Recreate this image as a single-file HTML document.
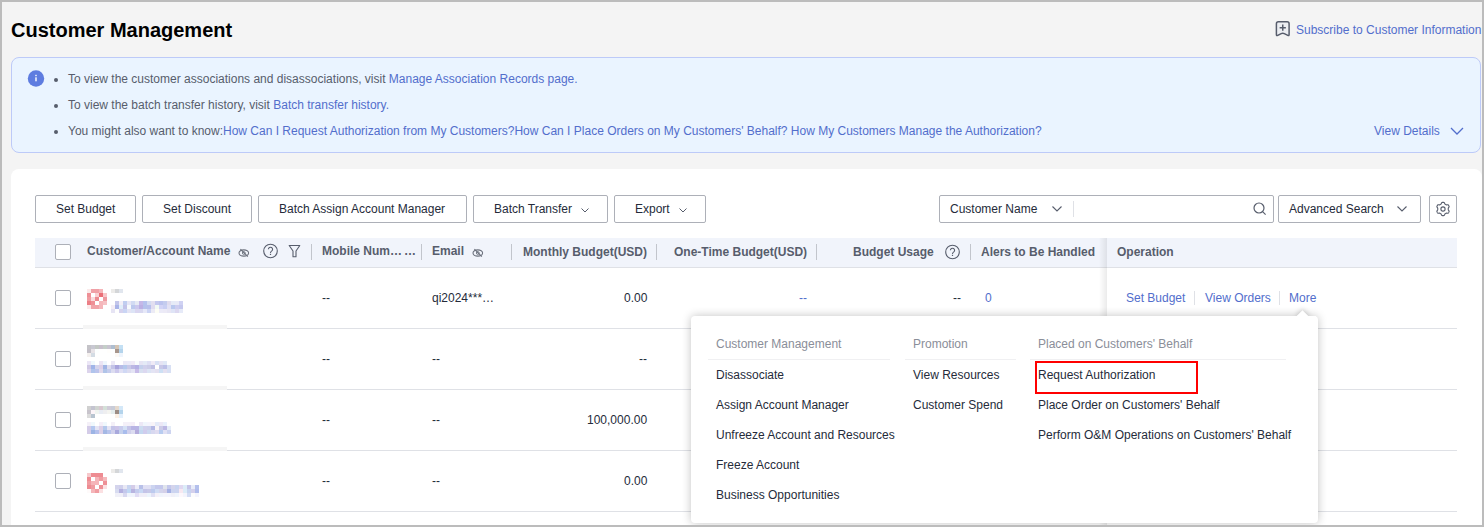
<!DOCTYPE html>
<html><head><meta charset="utf-8">
<style>
*{box-sizing:border-box;margin:0;padding:0}
html,body{width:1484px;height:527px;overflow:hidden;background:#f4f4f4;font-family:"Liberation Sans",sans-serif;color:#252b3a}
.t{position:absolute;font-size:12px;line-height:14px;white-space:nowrap}
.b{font-weight:bold}
.lk{color:#526ecc}
.sec{color:#575d6c}
.frame{position:absolute;left:0;top:0;width:1484px;height:527px;border:2px solid #bcbcbc;z-index:100;pointer-events:none}
.info{position:absolute;left:11px;top:57px;width:1470px;height:96px;background:#eaf4ff;border:1px solid #bdcaf8;border-radius:8px}
.card{position:absolute;left:11px;top:169px;width:1471px;height:400px;background:#fff;border-radius:8px}
.btn{position:absolute;top:195px;height:28px;border:1px solid #adb0b8;border-radius:2px;background:#fff}
.thead{position:absolute;left:35px;top:238px;width:1422px;height:30px;background:#f1f4fb;border-bottom:1px solid #dfe1e6}
.row{position:absolute;left:35px;width:1422px;height:61px;border-bottom:1px solid #dfe1e6}
.cb{position:absolute;width:16px;height:16px;border:1px solid #adb0b8;border-radius:2px;background:#fff}
.sep{position:absolute;width:1px;background:#c2c5cc}
.dd{position:absolute;left:691px;top:316px;width:627px;height:207px;background:#fff;border-radius:4px;box-shadow:0 0 10px rgba(0,0,0,0.24);z-index:10}
.ddc{position:absolute;left:0;top:0;z-index:13}
.gh{color:#8a8e99}
.hr{position:absolute;top:359px;height:1px;background:#f0f0f2}
</style></head><body>
<div class="frame"></div>
<div class="t b" style="left:11px;top:19px;font-size:20px;line-height:22px;color:#000">Customer Management</div>
<!-- subscribe -->
<svg style="position:absolute;left:1275px;top:20px" width="16" height="18" viewBox="0 0 16 18"><path d="M1.4 3.7Q1.4 1.7 3.4 1.7H12.1Q14.1 1.7 14.1 3.7V14.6Q14.1 16 12.8 15.4L9.3 13.6Q7.75 12.8 6.2 13.6L2.7 15.4Q1.4 16 1.4 14.6Z" fill="#eceef2" stroke="#575d6c" stroke-width="1.5" stroke-linejoin="round"/><path d="M7.75 4.6v6.2M4.65 7.7h6.2" stroke="#575d6c" stroke-width="1.5"/></svg>
<div class="t lk" style="left:1296px;top:23px">Subscribe to Customer Information</div>
<!-- info -->
<div class="info"></div>
<svg style="position:absolute;left:27px;top:70px" width="18" height="18" viewBox="0 0 18 18"><circle cx="9" cy="8.5" r="8.2" fill="#5e7ce0"/><rect x="8.3" y="7.3" width="1.4" height="4" fill="#fff"/><rect x="8.3" y="4.8" width="1.4" height="1.4" fill="#fff"/></svg>
<div style="position:absolute;left:54px;top:78px;width:4px;height:4px;border-radius:2px;background:#575d6c"></div>
<div style="position:absolute;left:54px;top:104px;width:4px;height:4px;border-radius:2px;background:#575d6c"></div>
<div style="position:absolute;left:54px;top:130px;width:4px;height:4px;border-radius:2px;background:#575d6c"></div>
<div class="t sec" style="left:68px;top:72px">To view the customer associations and disassociations, visit <span class="lk">Manage Association Records page.</span></div>
<div class="t sec" style="left:68px;top:98px">To view the batch transfer history, visit <span class="lk">Batch transfer history.</span></div>
<div class="t sec" style="left:68px;top:124px">You might also want to know:<span class="lk">How Can I Request Authorization from My Customers?How Can I Place Orders on My Customers' Behalf? How My Customers Manage the Authorization?</span></div>
<div class="t lk" style="left:1374px;top:124px">View Details</div>
<svg style="position:absolute;left:1450px;top:126px" width="14" height="10" viewBox="0 0 14 10"><path d="M1 2l6 6 6-6" fill="none" stroke="#526ecc" stroke-width="1.3"/></svg>
<!-- card -->
<div class="card"></div>
<div class="btn" style="left:35px;width:101px"></div><div class="t" style="left:56px;top:202px">Set Budget</div>
<div class="btn" style="left:142px;width:110px"></div><div class="t" style="left:163px;top:202px">Set Discount</div>
<div class="btn" style="left:258px;width:209px"></div><div class="t" style="left:279px;top:202px">Batch Assign Account Manager</div>
<div class="btn" style="left:473px;width:135px"></div><div class="t" style="left:494px;top:202px">Batch Transfer</div>
<svg style="position:absolute;left:580px;top:206px" width="10" height="8" viewBox="0 0 10 8"><path d="M1.5 2.5l3.5 3.5 3.5-3.5" fill="none" stroke="#575d6c" stroke-width="1"/></svg>
<div class="btn" style="left:614px;width:92px"></div><div class="t" style="left:635px;top:202px">Export</div>
<svg style="position:absolute;left:678px;top:206px" width="10" height="8" viewBox="0 0 10 8"><path d="M1.5 2.5l3.5 3.5 3.5-3.5" fill="none" stroke="#575d6c" stroke-width="1"/></svg>
<!-- search -->
<div class="btn" style="left:939px;width:335px"></div>
<div class="t" style="left:950px;top:202px">Customer Name</div>
<svg style="position:absolute;left:1050px;top:204px" width="14" height="10" viewBox="0 0 14 10"><path d="M2.5 2.5l4.5 4.5 4.5-4.5" fill="none" stroke="#575d6c" stroke-width="1.1"/></svg>
<div class="sep" style="left:1073px;top:201px;height:16px;background:#dfe1e6"></div>
<svg style="position:absolute;left:1253px;top:202px" width="14" height="14" viewBox="0 0 14 14"><circle cx="6" cy="6" r="5" fill="none" stroke="#575d6c" stroke-width="1.2"/><path d="M9.6 9.6l3 3" stroke="#575d6c" stroke-width="1.2"/></svg>
<div class="btn" style="left:1278px;width:143px"></div>
<div class="t" style="left:1289px;top:202px">Advanced Search</div>
<svg style="position:absolute;left:1395px;top:204px" width="14" height="10" viewBox="0 0 14 10"><path d="M2.5 2.5l4.5 4.5 4.5-4.5" fill="none" stroke="#575d6c" stroke-width="1.1"/></svg>
<div class="btn" style="left:1429px;width:28px"></div>
<svg style="position:absolute;left:1435px;top:201px" width="16" height="16" viewBox="0 0 16 16"><path d="M13.25 8.00 L13.25 7.77 L13.25 7.54 L13.26 7.31 L13.31 7.06 L13.47 6.79 L13.75 6.46 L14.00 6.11 L14.11 5.78 L14.09 5.48 L14.01 5.20 L13.90 4.93 L13.76 4.68 L13.61 4.43 L13.43 4.20 L13.23 3.99 L12.98 3.82 L12.64 3.75 L12.21 3.79 L11.79 3.87 L11.47 3.87 L11.23 3.79 L11.02 3.68 L10.82 3.57 L10.62 3.45 L10.43 3.34 L10.23 3.23 L10.03 3.10 L9.85 2.93 L9.69 2.65 L9.54 2.25 L9.36 1.85 L9.13 1.60 L8.86 1.46 L8.58 1.39 L8.29 1.36 L8.00 1.35 L7.71 1.36 L7.42 1.39 L7.14 1.46 L6.87 1.60 L6.64 1.85 L6.46 2.25 L6.31 2.65 L6.15 2.93 L5.97 3.10 L5.77 3.23 L5.57 3.34 L5.38 3.45 L5.18 3.57 L4.98 3.68 L4.77 3.79 L4.53 3.87 L4.21 3.87 L3.79 3.79 L3.36 3.75 L3.02 3.82 L2.77 3.99 L2.57 4.20 L2.39 4.43 L2.24 4.67 L2.10 4.93 L1.99 5.20 L1.91 5.48 L1.89 5.78 L2.00 6.11 L2.25 6.46 L2.53 6.79 L2.69 7.06 L2.74 7.31 L2.75 7.54 L2.75 7.77 L2.75 8.00 L2.75 8.23 L2.75 8.46 L2.74 8.69 L2.69 8.94 L2.53 9.21 L2.25 9.54 L2.00 9.89 L1.89 10.22 L1.91 10.52 L1.99 10.80 L2.10 11.07 L2.24 11.33 L2.39 11.57 L2.57 11.80 L2.77 12.01 L3.02 12.18 L3.36 12.25 L3.79 12.21 L4.21 12.13 L4.53 12.13 L4.77 12.21 L4.98 12.32 L5.18 12.43 L5.37 12.55 L5.57 12.66 L5.77 12.77 L5.97 12.90 L6.15 13.07 L6.31 13.35 L6.46 13.75 L6.64 14.15 L6.87 14.40 L7.14 14.54 L7.42 14.61 L7.71 14.64 L8.00 14.65 L8.29 14.64 L8.58 14.61 L8.86 14.54 L9.13 14.40 L9.36 14.15 L9.54 13.75 L9.69 13.35 L9.85 13.07 L10.03 12.90 L10.23 12.77 L10.43 12.66 L10.62 12.55 L10.82 12.43 L11.02 12.32 L11.23 12.21 L11.47 12.13 L11.79 12.13 L12.21 12.21 L12.64 12.25 L12.98 12.18 L13.23 12.01 L13.43 11.80 L13.61 11.57 L13.76 11.32 L13.90 11.07 L14.01 10.80 L14.09 10.52 L14.11 10.22 L14.00 9.89 L13.75 9.54 L13.47 9.21 L13.31 8.94 L13.26 8.69 L13.25 8.46 L13.25 8.23Z" fill="none" stroke="#575d6c" stroke-width="1.1" stroke-linejoin="round"/><circle cx="8" cy="8" r="2.1" fill="none" stroke="#575d6c" stroke-width="1.1"/></svg>
<!-- table header -->
<div class="thead"></div>
<div class="cb" style="left:55px;top:244px"></div>
<div class="t b sec" style="left:87px;top:244px">Customer/Account Name</div>
<div class="t b sec" style="left:322px;top:244px">Mobile Num…<span style="margin-left:2px">…</span></div>
<div class="t b sec" style="left:432px;top:244px">Email</div>
<div class="t b sec" style="left:523px;top:245px">Monthly Budget(USD)</div>
<div class="t b sec" style="left:674px;top:245px">One-Time Budget(USD)</div>
<div class="t b sec" style="left:853px;top:245px">Budget Usage</div>
<div class="t b sec" style="left:981px;top:245px">Alers to Be Handled</div>
<div class="t b sec" style="left:1117px;top:245px">Operation</div>

<svg style="position:absolute;left:237px;top:248px" width="14" height="11" viewBox="0 0 14 11"><ellipse cx="6.8" cy="5" rx="4.8" ry="3.1" fill="none" stroke="#6b707c" stroke-width="1.1"/><circle cx="6.8" cy="5" r="1.4" fill="none" stroke="#6b707c" stroke-width="0.9"/><path d="M3.4 1.2L10.8 8.6" stroke="#6b707c" stroke-width="1.1"/></svg>
<svg style="position:absolute;left:262px;top:243px" width="17" height="16" viewBox="0 0 17 16"><circle cx="8.5" cy="8" r="6.8" fill="none" stroke="#575d6c" stroke-width="1.1"/><path d="M6.4 6.3a2.1 2.1 0 1 1 3.2 1.8c-.8.5-1.1.9-1.1 1.8" fill="none" stroke="#575d6c" stroke-width="1.1"/><rect x="7.9" y="10.8" width="1.2" height="1.2" fill="#575d6c"/></svg>
<svg style="position:absolute;left:288px;top:244px" width="13" height="14" viewBox="0 0 13 14"><path d="M1.2 1.5h10.6L8 7v5.8H5V7z" fill="none" stroke="#575d6c" stroke-width="1.1" stroke-linejoin="round"/></svg>
<svg style="position:absolute;left:471px;top:248px" width="14" height="11" viewBox="0 0 14 11"><ellipse cx="6.8" cy="5" rx="4.8" ry="3.1" fill="none" stroke="#6b707c" stroke-width="1.1"/><circle cx="6.8" cy="5" r="1.4" fill="none" stroke="#6b707c" stroke-width="0.9"/><path d="M3.4 1.2L10.8 8.6" stroke="#6b707c" stroke-width="1.1"/></svg>
<svg style="position:absolute;left:944px;top:244px" width="17" height="16" viewBox="0 0 17 16"><circle cx="8.5" cy="8" r="6.8" fill="none" stroke="#575d6c" stroke-width="1.1"/><path d="M6.4 6.3a2.1 2.1 0 1 1 3.2 1.8c-.8.5-1.1.9-1.1 1.8" fill="none" stroke="#575d6c" stroke-width="1.1"/><rect x="7.9" y="10.8" width="1.2" height="1.2" fill="#575d6c"/></svg>
<div class="sep" style="left:311px;top:244px;height:16px"></div>
<div class="sep" style="left:421px;top:244px;height:16px"></div>
<div class="sep" style="left:511px;top:244px;height:16px"></div>
<div class="sep" style="left:656px;top:244px;height:16px"></div>
<div class="sep" style="left:816px;top:244px;height:16px"></div>
<div class="sep" style="left:970px;top:244px;height:16px"></div>

<!-- rows -->
<div class="row" style="top:268px"></div>
<div class="row" style="top:329px"></div>
<div class="row" style="top:390px"></div>
<div class="row" style="top:451px"></div>
<div style="position:absolute;left:83px;top:325px;width:144px;height:4px;background:#f5f5f5"></div>
<div style="position:absolute;left:83px;top:386px;width:144px;height:4px;background:#f5f5f5"></div>
<div style="position:absolute;left:83px;top:447px;width:144px;height:4px;background:#f5f5f5"></div>
<div class="cb" style="left:55px;top:290px"></div>
<div class="cb" style="left:55px;top:351px"></div>
<div class="cb" style="left:55px;top:412px"></div>
<div class="cb" style="left:55px;top:473px"></div>
<svg style="position:absolute;left:87px;top:289px" width="20" height="20" shape-rendering="crispEdges"><rect x="0" y="0" width="4" height="4" fill="#fbeaea"/><rect x="4" y="0" width="4" height="4" fill="#f0a0a6"/><rect x="8" y="0" width="4" height="4" fill="#f0a0a6"/><rect x="12" y="0" width="4" height="4" fill="#f5b5b9"/><rect x="0" y="4" width="4" height="4" fill="#ee9096"/><rect x="8" y="4" width="4" height="4" fill="#f8d0d3"/><rect x="12" y="4" width="4" height="4" fill="#ea6f77"/><rect x="16" y="4" width="4" height="4" fill="#f7c7ca"/><rect x="0" y="8" width="4" height="4" fill="#f09ca1"/><rect x="4" y="8" width="4" height="4" fill="#f9dadd"/><rect x="8" y="8" width="4" height="4" fill="#ec8a90"/><rect x="16" y="8" width="4" height="4" fill="#ee9aa0"/><rect x="0" y="12" width="4" height="4" fill="#ec7f86"/><rect x="4" y="12" width="4" height="4" fill="#ee9096"/><rect x="12" y="12" width="4" height="4" fill="#f5b7bb"/><rect x="16" y="12" width="4" height="4" fill="#f5c1c4"/><rect x="0" y="16" width="4" height="4" fill="#fbe9ea"/><rect x="4" y="16" width="4" height="4" fill="#f0a3a8"/><rect x="8" y="16" width="4" height="4" fill="#f0a3a8"/><rect x="12" y="16" width="4" height="4" fill="#f5b5b9"/></svg>
<svg style="position:absolute;left:111px;top:289px" width="12" height="4" shape-rendering="crispEdges"><rect x="0" y="0" width="4" height="4" fill="#ecebe9"/><rect x="4" y="0" width="4" height="4" fill="#d4d6d8"/><rect x="8" y="0" width="4" height="4" fill="#e1e6ee"/></svg>
<svg style="position:absolute;left:111px;top:301px" width="72" height="12" shape-rendering="crispEdges"><rect x="4" y="0" width="4" height="4" fill="#c3c6ea"/><rect x="8" y="0" width="4" height="4" fill="#f3eff8"/><rect x="12" y="0" width="4" height="4" fill="#c0cdf0"/><rect x="16" y="0" width="4" height="4" fill="#e6e6f6"/><rect x="20" y="0" width="4" height="4" fill="#d2dbf3"/><rect x="24" y="0" width="4" height="4" fill="#e6eaf4"/><rect x="28" y="0" width="4" height="4" fill="#c5b8e8"/><rect x="32" y="0" width="4" height="4" fill="#b5c2ee"/><rect x="36" y="0" width="4" height="4" fill="#d4dcf2"/><rect x="40" y="0" width="4" height="4" fill="#e2dff0"/><rect x="44" y="0" width="4" height="4" fill="#c4c8ee"/><rect x="48" y="0" width="4" height="4" fill="#bcc3ee"/><rect x="52" y="0" width="4" height="4" fill="#c4ccee"/><rect x="56" y="0" width="4" height="4" fill="#e0dcee"/><rect x="60" y="0" width="4" height="4" fill="#e6ebf7"/><rect x="64" y="0" width="4" height="4" fill="#e8eaf7"/><rect x="68" y="0" width="4" height="4" fill="#d0d2f3"/><rect x="0" y="4" width="4" height="4" fill="#f5eef5"/><rect x="4" y="4" width="4" height="4" fill="#aab4e8"/><rect x="8" y="4" width="4" height="4" fill="#e0eefa"/><rect x="12" y="4" width="4" height="4" fill="#c3c3e9"/><rect x="16" y="4" width="4" height="4" fill="#f7fafd"/><rect x="20" y="4" width="4" height="4" fill="#bcc9ee"/><rect x="24" y="4" width="4" height="4" fill="#cbc8ee"/><rect x="28" y="4" width="4" height="4" fill="#bcb0e4"/><rect x="32" y="4" width="4" height="4" fill="#b5c2ec"/><rect x="36" y="4" width="4" height="4" fill="#b8c0ec"/><rect x="40" y="4" width="4" height="4" fill="#e0dcf0"/><rect x="44" y="4" width="4" height="4" fill="#f2faf4"/><rect x="48" y="4" width="4" height="4" fill="#d3d4f6"/><rect x="52" y="4" width="4" height="4" fill="#c9cff3"/><rect x="56" y="4" width="4" height="4" fill="#e2e1f4"/><rect x="60" y="4" width="4" height="4" fill="#b9c8ee"/><rect x="64" y="4" width="4" height="4" fill="#cdcdf0"/><rect x="68" y="4" width="4" height="4" fill="#c5c8ee"/><rect x="0" y="8" width="4" height="4" fill="#e6e4f4"/><rect x="4" y="8" width="4" height="4" fill="#fefefe"/><rect x="8" y="8" width="4" height="4" fill="#d6d2ee"/><rect x="12" y="8" width="4" height="4" fill="#cad5f4"/><rect x="16" y="8" width="4" height="4" fill="#e4e4f4"/><rect x="20" y="8" width="4" height="4" fill="#dde4f6"/><rect x="24" y="8" width="4" height="4" fill="#dad6f0"/><rect x="28" y="8" width="4" height="4" fill="#d8d8f0"/><rect x="32" y="8" width="4" height="4" fill="#e6e8f8"/><rect x="36" y="8" width="4" height="4" fill="#ccd4f4"/><rect x="40" y="8" width="4" height="4" fill="#ecebf5"/><rect x="44" y="8" width="4" height="4" fill="#fdfdf5"/><rect x="48" y="8" width="4" height="4" fill="#ecebf8"/><rect x="52" y="8" width="4" height="4" fill="#eceaf6"/><rect x="56" y="8" width="4" height="4" fill="#e8e6f4"/><rect x="60" y="8" width="4" height="4" fill="#dfe4f6"/><rect x="64" y="8" width="4" height="4" fill="#dcd8f0"/><rect x="68" y="8" width="4" height="4" fill="#e6eaf8"/></svg>
<svg style="position:absolute;left:87px;top:345px" width="36" height="12" shape-rendering="crispEdges"><rect x="0" y="0" width="4" height="4" fill="#c4c3c8"/><rect x="4" y="0" width="4" height="4" fill="#c8c8d2"/><rect x="8" y="0" width="4" height="4" fill="#c3c8c4"/><rect x="12" y="0" width="4" height="4" fill="#c8c0cc"/><rect x="16" y="0" width="4" height="4" fill="#c4cec8"/><rect x="20" y="0" width="4" height="4" fill="#c8c4d0"/><rect x="24" y="0" width="4" height="4" fill="#aebed0"/><rect x="28" y="0" width="4" height="4" fill="#d4c4b4"/><rect x="32" y="0" width="4" height="4" fill="#c4e0f4"/><rect x="0" y="4" width="4" height="4" fill="#c4c0c8"/><rect x="4" y="4" width="4" height="4" fill="#e8e4e8"/><rect x="8" y="4" width="4" height="4" fill="#fcffff"/><rect x="20" y="4" width="4" height="4" fill="#fffefc"/><rect x="28" y="4" width="4" height="4" fill="#a8968c"/><rect x="32" y="4" width="4" height="4" fill="#b4d4ec"/><rect x="0" y="8" width="4" height="4" fill="#f4f0ee"/><rect x="4" y="8" width="4" height="4" fill="#d4dce4"/><rect x="28" y="8" width="4" height="4" fill="#fcf8f4"/><rect x="32" y="8" width="4" height="4" fill="#eef4fc"/></svg>
<svg style="position:absolute;left:87px;top:361px" width="84" height="12" shape-rendering="crispEdges"><rect x="0" y="0" width="4" height="4" fill="#ebe6f6"/><rect x="4" y="0" width="4" height="4" fill="#f0f8fc"/><rect x="12" y="0" width="4" height="4" fill="#ebe4f4"/><rect x="16" y="0" width="4" height="4" fill="#eef6fc"/><rect x="24" y="0" width="4" height="4" fill="#ebe8f6"/><rect x="36" y="0" width="4" height="4" fill="#ebe8f6"/><rect x="40" y="0" width="4" height="4" fill="#ebeaf8"/><rect x="44" y="0" width="4" height="4" fill="#efeaf6"/><rect x="48" y="0" width="4" height="4" fill="#f8fcfc"/><rect x="52" y="0" width="4" height="4" fill="#e6e4f4"/><rect x="56" y="0" width="4" height="4" fill="#e4eaf6"/><rect x="60" y="0" width="4" height="4" fill="#dedff4"/><rect x="64" y="0" width="4" height="4" fill="#efeaf6"/><rect x="68" y="0" width="4" height="4" fill="#d8e0f4"/><rect x="72" y="0" width="4" height="4" fill="#e6e4f4"/><rect x="76" y="0" width="4" height="4" fill="#e0e8f6"/><rect x="0" y="4" width="4" height="4" fill="#d0c8e4"/><rect x="4" y="4" width="4" height="4" fill="#a0b4e8"/><rect x="8" y="4" width="4" height="4" fill="#d4d4ec"/><rect x="12" y="4" width="4" height="4" fill="#dcd0e8"/><rect x="16" y="4" width="4" height="4" fill="#a0b4e4"/><rect x="20" y="4" width="4" height="4" fill="#dcdcee"/><rect x="24" y="4" width="4" height="4" fill="#c4c4e8"/><rect x="28" y="4" width="4" height="4" fill="#a8a4dc"/><rect x="32" y="4" width="4" height="4" fill="#b8bce8"/><rect x="36" y="4" width="4" height="4" fill="#b4c8ec"/><rect x="40" y="4" width="4" height="4" fill="#c8c8e8"/><rect x="44" y="4" width="4" height="4" fill="#bcb8e4"/><rect x="48" y="4" width="4" height="4" fill="#b4b0e4"/><rect x="52" y="4" width="4" height="4" fill="#c4d0ec"/><rect x="56" y="4" width="4" height="4" fill="#d0d0ec"/><rect x="60" y="4" width="4" height="4" fill="#cccce8"/><rect x="64" y="4" width="4" height="4" fill="#c0c0e4"/><rect x="72" y="4" width="4" height="4" fill="#c8c8e8"/><rect x="76" y="4" width="4" height="4" fill="#bcc0e8"/><rect x="80" y="4" width="4" height="4" fill="#d8e0f4"/><rect x="0" y="8" width="4" height="4" fill="#dcd4ec"/><rect x="4" y="8" width="4" height="4" fill="#b0c4ec"/><rect x="8" y="8" width="4" height="4" fill="#bcc4ec"/><rect x="12" y="8" width="4" height="4" fill="#e0d8ec"/><rect x="16" y="8" width="4" height="4" fill="#b0c4e8"/><rect x="20" y="8" width="4" height="4" fill="#c4cced"/><rect x="24" y="8" width="4" height="4" fill="#dcdcf0"/><rect x="28" y="8" width="4" height="4" fill="#ccc8ec"/><rect x="32" y="8" width="4" height="4" fill="#e0e0f4"/><rect x="36" y="8" width="4" height="4" fill="#d0d8f4"/><rect x="40" y="8" width="4" height="4" fill="#dcdcf0"/><rect x="44" y="8" width="4" height="4" fill="#e4e4f4"/><rect x="48" y="8" width="4" height="4" fill="#c8bce8"/><rect x="52" y="8" width="4" height="4" fill="#d8e0f0"/><rect x="56" y="8" width="4" height="4" fill="#dcd8f0"/><rect x="60" y="8" width="4" height="4" fill="#dce4f4"/><rect x="64" y="8" width="4" height="4" fill="#e4e4f4"/><rect x="68" y="8" width="4" height="4" fill="#e4e0f0"/><rect x="72" y="8" width="4" height="4" fill="#cde0f4"/><rect x="76" y="8" width="4" height="4" fill="#e4e0f0"/><rect x="80" y="8" width="4" height="4" fill="#d8e0f4"/></svg>
<svg style="position:absolute;left:87px;top:406px" width="36" height="12" shape-rendering="crispEdges"><rect x="0" y="0" width="4" height="4" fill="#d0d0d0"/><rect x="4" y="0" width="4" height="4" fill="#c4c4d0"/><rect x="8" y="0" width="4" height="4" fill="#d0d4d0"/><rect x="12" y="0" width="4" height="4" fill="#d8c8d0"/><rect x="16" y="0" width="4" height="4" fill="#d4e0d8"/><rect x="20" y="0" width="4" height="4" fill="#d0ccd8"/><rect x="24" y="0" width="4" height="4" fill="#c8ccd8"/><rect x="28" y="0" width="4" height="4" fill="#e4d8cc"/><rect x="32" y="0" width="4" height="4" fill="#d4e8f8"/><rect x="0" y="4" width="4" height="4" fill="#c8c4cc"/><rect x="4" y="4" width="4" height="4" fill="#fcf4f8"/><rect x="8" y="4" width="4" height="4" fill="#f0f4f0"/><rect x="12" y="4" width="4" height="4" fill="#e8ecf4"/><rect x="16" y="4" width="4" height="4" fill="#eeeef0"/><rect x="20" y="4" width="4" height="4" fill="#f4f4f0"/><rect x="24" y="4" width="4" height="4" fill="#e4ecec"/><rect x="28" y="4" width="4" height="4" fill="#9c8c84"/><rect x="32" y="4" width="4" height="4" fill="#b4d4ec"/><rect x="0" y="8" width="4" height="4" fill="#dcdcdc"/><rect x="4" y="8" width="4" height="4" fill="#b8c4d0"/><rect x="28" y="8" width="4" height="4" fill="#fcf0e4"/><rect x="32" y="8" width="4" height="4" fill="#e4f0fc"/></svg>
<svg style="position:absolute;left:87px;top:422px" width="84" height="12" shape-rendering="crispEdges"><rect x="0" y="0" width="4" height="4" fill="#f4f0f8"/><rect x="4" y="0" width="4" height="4" fill="#f0f8fc"/><rect x="12" y="0" width="4" height="4" fill="#f4eef8"/><rect x="16" y="0" width="4" height="4" fill="#f0f8fc"/><rect x="24" y="0" width="4" height="4" fill="#f4f0f8"/><rect x="36" y="0" width="4" height="4" fill="#f4f0f8"/><rect x="40" y="0" width="4" height="4" fill="#f4f0f8"/><rect x="44" y="0" width="4" height="4" fill="#f4eef8"/><rect x="52" y="0" width="4" height="4" fill="#ece8f6"/><rect x="56" y="0" width="4" height="4" fill="#f0f6fc"/><rect x="60" y="0" width="4" height="4" fill="#f4f4fc"/><rect x="64" y="0" width="4" height="4" fill="#f8f4f8"/><rect x="68" y="0" width="4" height="4" fill="#e4eaf8"/><rect x="72" y="0" width="4" height="4" fill="#ece8f6"/><rect x="76" y="0" width="4" height="4" fill="#e8f0fc"/><rect x="0" y="4" width="4" height="4" fill="#d4cce8"/><rect x="4" y="4" width="4" height="4" fill="#b4c8f0"/><rect x="8" y="4" width="4" height="4" fill="#e4e4f4"/><rect x="12" y="4" width="4" height="4" fill="#dcd0e8"/><rect x="16" y="4" width="4" height="4" fill="#b4c8ec"/><rect x="20" y="4" width="4" height="4" fill="#e4e4f4"/><rect x="24" y="4" width="4" height="4" fill="#c4c4e8"/><rect x="28" y="4" width="4" height="4" fill="#ccc4e8"/><rect x="32" y="4" width="4" height="4" fill="#c8cced"/><rect x="36" y="4" width="4" height="4" fill="#d4e0f4"/><rect x="40" y="4" width="4" height="4" fill="#c4c4e8"/><rect x="44" y="4" width="4" height="4" fill="#b8b4e4"/><rect x="48" y="4" width="4" height="4" fill="#b8b4e4"/><rect x="52" y="4" width="4" height="4" fill="#ccdcf0"/><rect x="56" y="4" width="4" height="4" fill="#d0d0ec"/><rect x="60" y="4" width="4" height="4" fill="#ccd0ec"/><rect x="64" y="4" width="4" height="4" fill="#b4b8e4"/><rect x="68" y="4" width="4" height="4" fill="#f8f4f8"/><rect x="72" y="4" width="4" height="4" fill="#cccce8"/><rect x="76" y="4" width="4" height="4" fill="#bcb8e4"/><rect x="80" y="4" width="4" height="4" fill="#e4ecf8"/><rect x="0" y="8" width="4" height="4" fill="#d4cce8"/><rect x="4" y="8" width="4" height="4" fill="#9cb4e4"/><rect x="8" y="8" width="4" height="4" fill="#b4c0ec"/><rect x="12" y="8" width="4" height="4" fill="#dcd0e8"/><rect x="16" y="8" width="4" height="4" fill="#a4b8e4"/><rect x="20" y="8" width="4" height="4" fill="#b8c4ec"/><rect x="24" y="8" width="4" height="4" fill="#d0d0ec"/><rect x="28" y="8" width="4" height="4" fill="#a8a8dc"/><rect x="32" y="8" width="4" height="4" fill="#c4d0ec"/><rect x="36" y="8" width="4" height="4" fill="#a8bcec"/><rect x="40" y="8" width="4" height="4" fill="#d0d0ec"/><rect x="44" y="8" width="4" height="4" fill="#dcdcf0"/><rect x="48" y="8" width="4" height="4" fill="#b4acdc"/><rect x="52" y="8" width="4" height="4" fill="#c4d8f0"/><rect x="56" y="8" width="4" height="4" fill="#d0cced"/><rect x="60" y="8" width="4" height="4" fill="#ccd8f0"/><rect x="64" y="8" width="4" height="4" fill="#d8d8f0"/><rect x="68" y="8" width="4" height="4" fill="#e0dcf0"/><rect x="72" y="8" width="4" height="4" fill="#b8ccf0"/><rect x="76" y="8" width="4" height="4" fill="#e0e0f4"/><rect x="80" y="8" width="4" height="4" fill="#cdd4f0"/></svg>
<svg style="position:absolute;left:87px;top:473px" width="20" height="20" shape-rendering="crispEdges"><rect x="0" y="0" width="4" height="4" fill="#f7c9cc"/><rect x="4" y="0" width="4" height="4" fill="#ee8c92"/><rect x="8" y="0" width="4" height="4" fill="#ee8c92"/><rect x="12" y="0" width="4" height="4" fill="#ee8c92"/><rect x="0" y="4" width="4" height="4" fill="#ee8c92"/><rect x="8" y="4" width="4" height="4" fill="#f5b5b9"/><rect x="12" y="4" width="4" height="4" fill="#f09ca1"/><rect x="16" y="4" width="4" height="4" fill="#f5b9bc"/><rect x="0" y="8" width="4" height="4" fill="#f09ca1"/><rect x="4" y="8" width="4" height="4" fill="#f5b5b9"/><rect x="8" y="8" width="4" height="4" fill="#f5b5b9"/><rect x="16" y="8" width="4" height="4" fill="#ee9096"/><rect x="0" y="12" width="4" height="4" fill="#ee8c92"/><rect x="4" y="12" width="4" height="4" fill="#f09ca1"/><rect x="12" y="12" width="4" height="4" fill="#ee9096"/><rect x="16" y="12" width="4" height="4" fill="#fbe0e2"/><rect x="0" y="16" width="4" height="4" fill="#fefafa"/><rect x="4" y="16" width="4" height="4" fill="#f5b5b9"/><rect x="8" y="16" width="4" height="4" fill="#f09ca1"/><rect x="12" y="16" width="4" height="4" fill="#fbe0e2"/></svg>
<svg style="position:absolute;left:111px;top:469px" width="12" height="4" shape-rendering="crispEdges"><rect x="0" y="0" width="4" height="4" fill="#ecebe9"/><rect x="4" y="0" width="4" height="4" fill="#d4d6d8"/><rect x="8" y="0" width="4" height="4" fill="#e1e6ee"/></svg>
<svg style="position:absolute;left:115px;top:485px" width="84" height="12" shape-rendering="crispEdges"><rect x="0" y="0" width="4" height="4" fill="#d4d4ec"/><rect x="4" y="0" width="4" height="4" fill="#d0d0ec"/><rect x="8" y="0" width="4" height="4" fill="#e8e8f4"/><rect x="12" y="0" width="4" height="4" fill="#c8d4f0"/><rect x="16" y="0" width="4" height="4" fill="#d4cce8"/><rect x="20" y="0" width="4" height="4" fill="#ececf8"/><rect x="24" y="0" width="4" height="4" fill="#b8c0e8"/><rect x="28" y="0" width="4" height="4" fill="#e0e0f4"/><rect x="32" y="0" width="4" height="4" fill="#e0e0f4"/><rect x="36" y="0" width="4" height="4" fill="#ccd4f0"/><rect x="40" y="0" width="4" height="4" fill="#c4c8ec"/><rect x="44" y="0" width="4" height="4" fill="#c4c8ec"/><rect x="48" y="0" width="4" height="4" fill="#e0e4ec"/><rect x="52" y="0" width="4" height="4" fill="#c4c8ec"/><rect x="56" y="0" width="4" height="4" fill="#d4d4ec"/><rect x="60" y="0" width="4" height="4" fill="#c8d4f0"/><rect x="64" y="0" width="4" height="4" fill="#e0d8f0"/><rect x="68" y="0" width="4" height="4" fill="#dcecf8"/><rect x="72" y="0" width="4" height="4" fill="#c4c4e8"/><rect x="76" y="0" width="4" height="4" fill="#e8ecf8"/><rect x="80" y="0" width="4" height="4" fill="#b4c0ec"/><rect x="0" y="4" width="4" height="4" fill="#d8dcf0"/><rect x="4" y="4" width="4" height="4" fill="#b4b0e0"/><rect x="8" y="4" width="4" height="4" fill="#c4c8ec"/><rect x="12" y="4" width="4" height="4" fill="#c0d8f4"/><rect x="16" y="4" width="4" height="4" fill="#b8b4e0"/><rect x="20" y="4" width="4" height="4" fill="#c4cced"/><rect x="24" y="4" width="4" height="4" fill="#c8d8f4"/><rect x="28" y="4" width="4" height="4" fill="#c4c4e8"/><rect x="32" y="4" width="4" height="4" fill="#c8c8e8"/><rect x="36" y="4" width="4" height="4" fill="#bccaee"/><rect x="40" y="4" width="4" height="4" fill="#d0dcf4"/><rect x="44" y="4" width="4" height="4" fill="#d4d4ec"/><rect x="48" y="4" width="4" height="4" fill="#d4d0e8"/><rect x="52" y="4" width="4" height="4" fill="#a4b0e4"/><rect x="56" y="4" width="4" height="4" fill="#ccd4f0"/><rect x="60" y="4" width="4" height="4" fill="#ccd4f0"/><rect x="64" y="4" width="4" height="4" fill="#f8e8f0"/><rect x="68" y="4" width="4" height="4" fill="#dcecf8"/><rect x="72" y="4" width="4" height="4" fill="#c8d4f0"/><rect x="76" y="4" width="4" height="4" fill="#d4d0ec"/><rect x="80" y="4" width="4" height="4" fill="#b0bcec"/><rect x="0" y="8" width="4" height="4" fill="#f0f0f8"/><rect x="4" y="8" width="4" height="4" fill="#f0f0f8"/><rect x="8" y="8" width="4" height="4" fill="#d8d8f0"/><rect x="12" y="8" width="4" height="4" fill="#f0f4fc"/><rect x="16" y="8" width="4" height="4" fill="#f0f4fc"/><rect x="20" y="8" width="4" height="4" fill="#e0dcf4"/><rect x="24" y="8" width="4" height="4" fill="#f0eef8"/><rect x="28" y="8" width="4" height="4" fill="#f0eef8"/><rect x="32" y="8" width="4" height="4" fill="#ecf4fc"/><rect x="36" y="8" width="4" height="4" fill="#e0e0f4"/><rect x="40" y="8" width="4" height="4" fill="#f4f0f8"/><rect x="44" y="8" width="4" height="4" fill="#f0f4fc"/><rect x="48" y="8" width="4" height="4" fill="#f4f4fc"/><rect x="52" y="8" width="4" height="4" fill="#f4f4fc"/><rect x="56" y="8" width="4" height="4" fill="#f0f0f8"/><rect x="60" y="8" width="4" height="4" fill="#f0f4fc"/><rect x="64" y="8" width="4" height="4" fill="#fdf8fc"/><rect x="68" y="8" width="4" height="4" fill="#f4f4fc"/><rect x="72" y="8" width="4" height="4" fill="#d4dcf4"/><rect x="76" y="8" width="4" height="4" fill="#fcfcfc"/><rect x="80" y="8" width="4" height="4" fill="#f4f4fc"/></svg>
<div class="t" style="left:322px;top:291px">--</div>
<div class="t" style="left:432px;top:291px">qi2024***…</div>
<div class="t" style="left:624px;top:291px">0.00</div>
<div class="t lk" style="left:799px;top:291px">--</div>
<div class="t" style="left:953px;top:291px">--</div>
<div class="t lk" style="left:985px;top:291px">0</div>
<div class="t" style="left:322px;top:352px">--</div>
<div class="t" style="left:432px;top:352px">--</div>
<div class="t" style="left:639px;top:352px">--</div>
<div class="t" style="left:322px;top:413px">--</div>
<div class="t" style="left:432px;top:413px">--</div>
<div class="t" style="left:587px;top:413px">100,000.00</div>
<div class="t" style="left:322px;top:474px">--</div>
<div class="t" style="left:432px;top:474px">--</div>
<div class="t" style="left:624px;top:474px">0.00</div>
<!-- fixed op column shadow -->
<div style="position:absolute;left:1099px;top:238px;width:8px;height:290px;background:linear-gradient(to right,rgba(0,0,0,0),rgba(0,0,0,0.08))"></div>
<div class="t lk" style="left:1126px;top:291px">Set Budget</div>
<div class="sep" style="left:1194px;top:291px;height:14px;background:#dfe1e6"></div>
<div class="t lk" style="left:1205px;top:291px">View Orders</div>
<div class="sep" style="left:1279px;top:291px;height:14px;background:#dfe1e6"></div>
<div class="t lk" style="left:1289px;top:291px">More</div>
<!-- dropdown -->
<div class="dd"></div>
<div style="position:absolute;left:1298px;top:312px;width:9px;height:9px;background:#fff;transform:rotate(45deg);box-shadow:-1px -1px 5px rgba(0,0,0,0.18);z-index:11"></div>
<div style="position:absolute;left:1290px;top:316px;width:26px;height:10px;background:#fff;z-index:12"></div>
<div class="ddc">
<div class="t gh" style="left:716px;top:337px">Customer Management</div>
<div class="hr" style="left:708px;width:182px"></div>
<div class="t" style="left:716px;top:368px">Disassociate</div>
<div class="t" style="left:716px;top:398px">Assign Account Manager</div>
<div class="t" style="left:716px;top:428px">Unfreeze Account and Resources</div>
<div class="t" style="left:716px;top:458px">Freeze Account</div>
<div class="t" style="left:716px;top:488px">Business Opportunities</div>
<div class="t gh" style="left:913px;top:337px">Promotion</div>
<div class="hr" style="left:905px;width:111px"></div>
<div class="t" style="left:913px;top:368px">View Resources</div>
<div class="t" style="left:913px;top:398px">Customer Spend</div>
<div class="t gh" style="left:1038px;top:337px">Placed on Customers' Behalf</div>
<div class="hr" style="left:1030px;width:256px"></div>
<div class="t" style="left:1038px;top:368px">Request Authorization</div>
<div class="t" style="left:1038px;top:398px">Place Order on Customers' Behalf</div>
<div class="t" style="left:1038px;top:428px">Perform O&amp;M Operations on Customers' Behalf</div>
<div style="position:absolute;left:1035px;top:361px;width:163px;height:33px;border:2px solid #ff0000"></div>
</div>
</body></html>
